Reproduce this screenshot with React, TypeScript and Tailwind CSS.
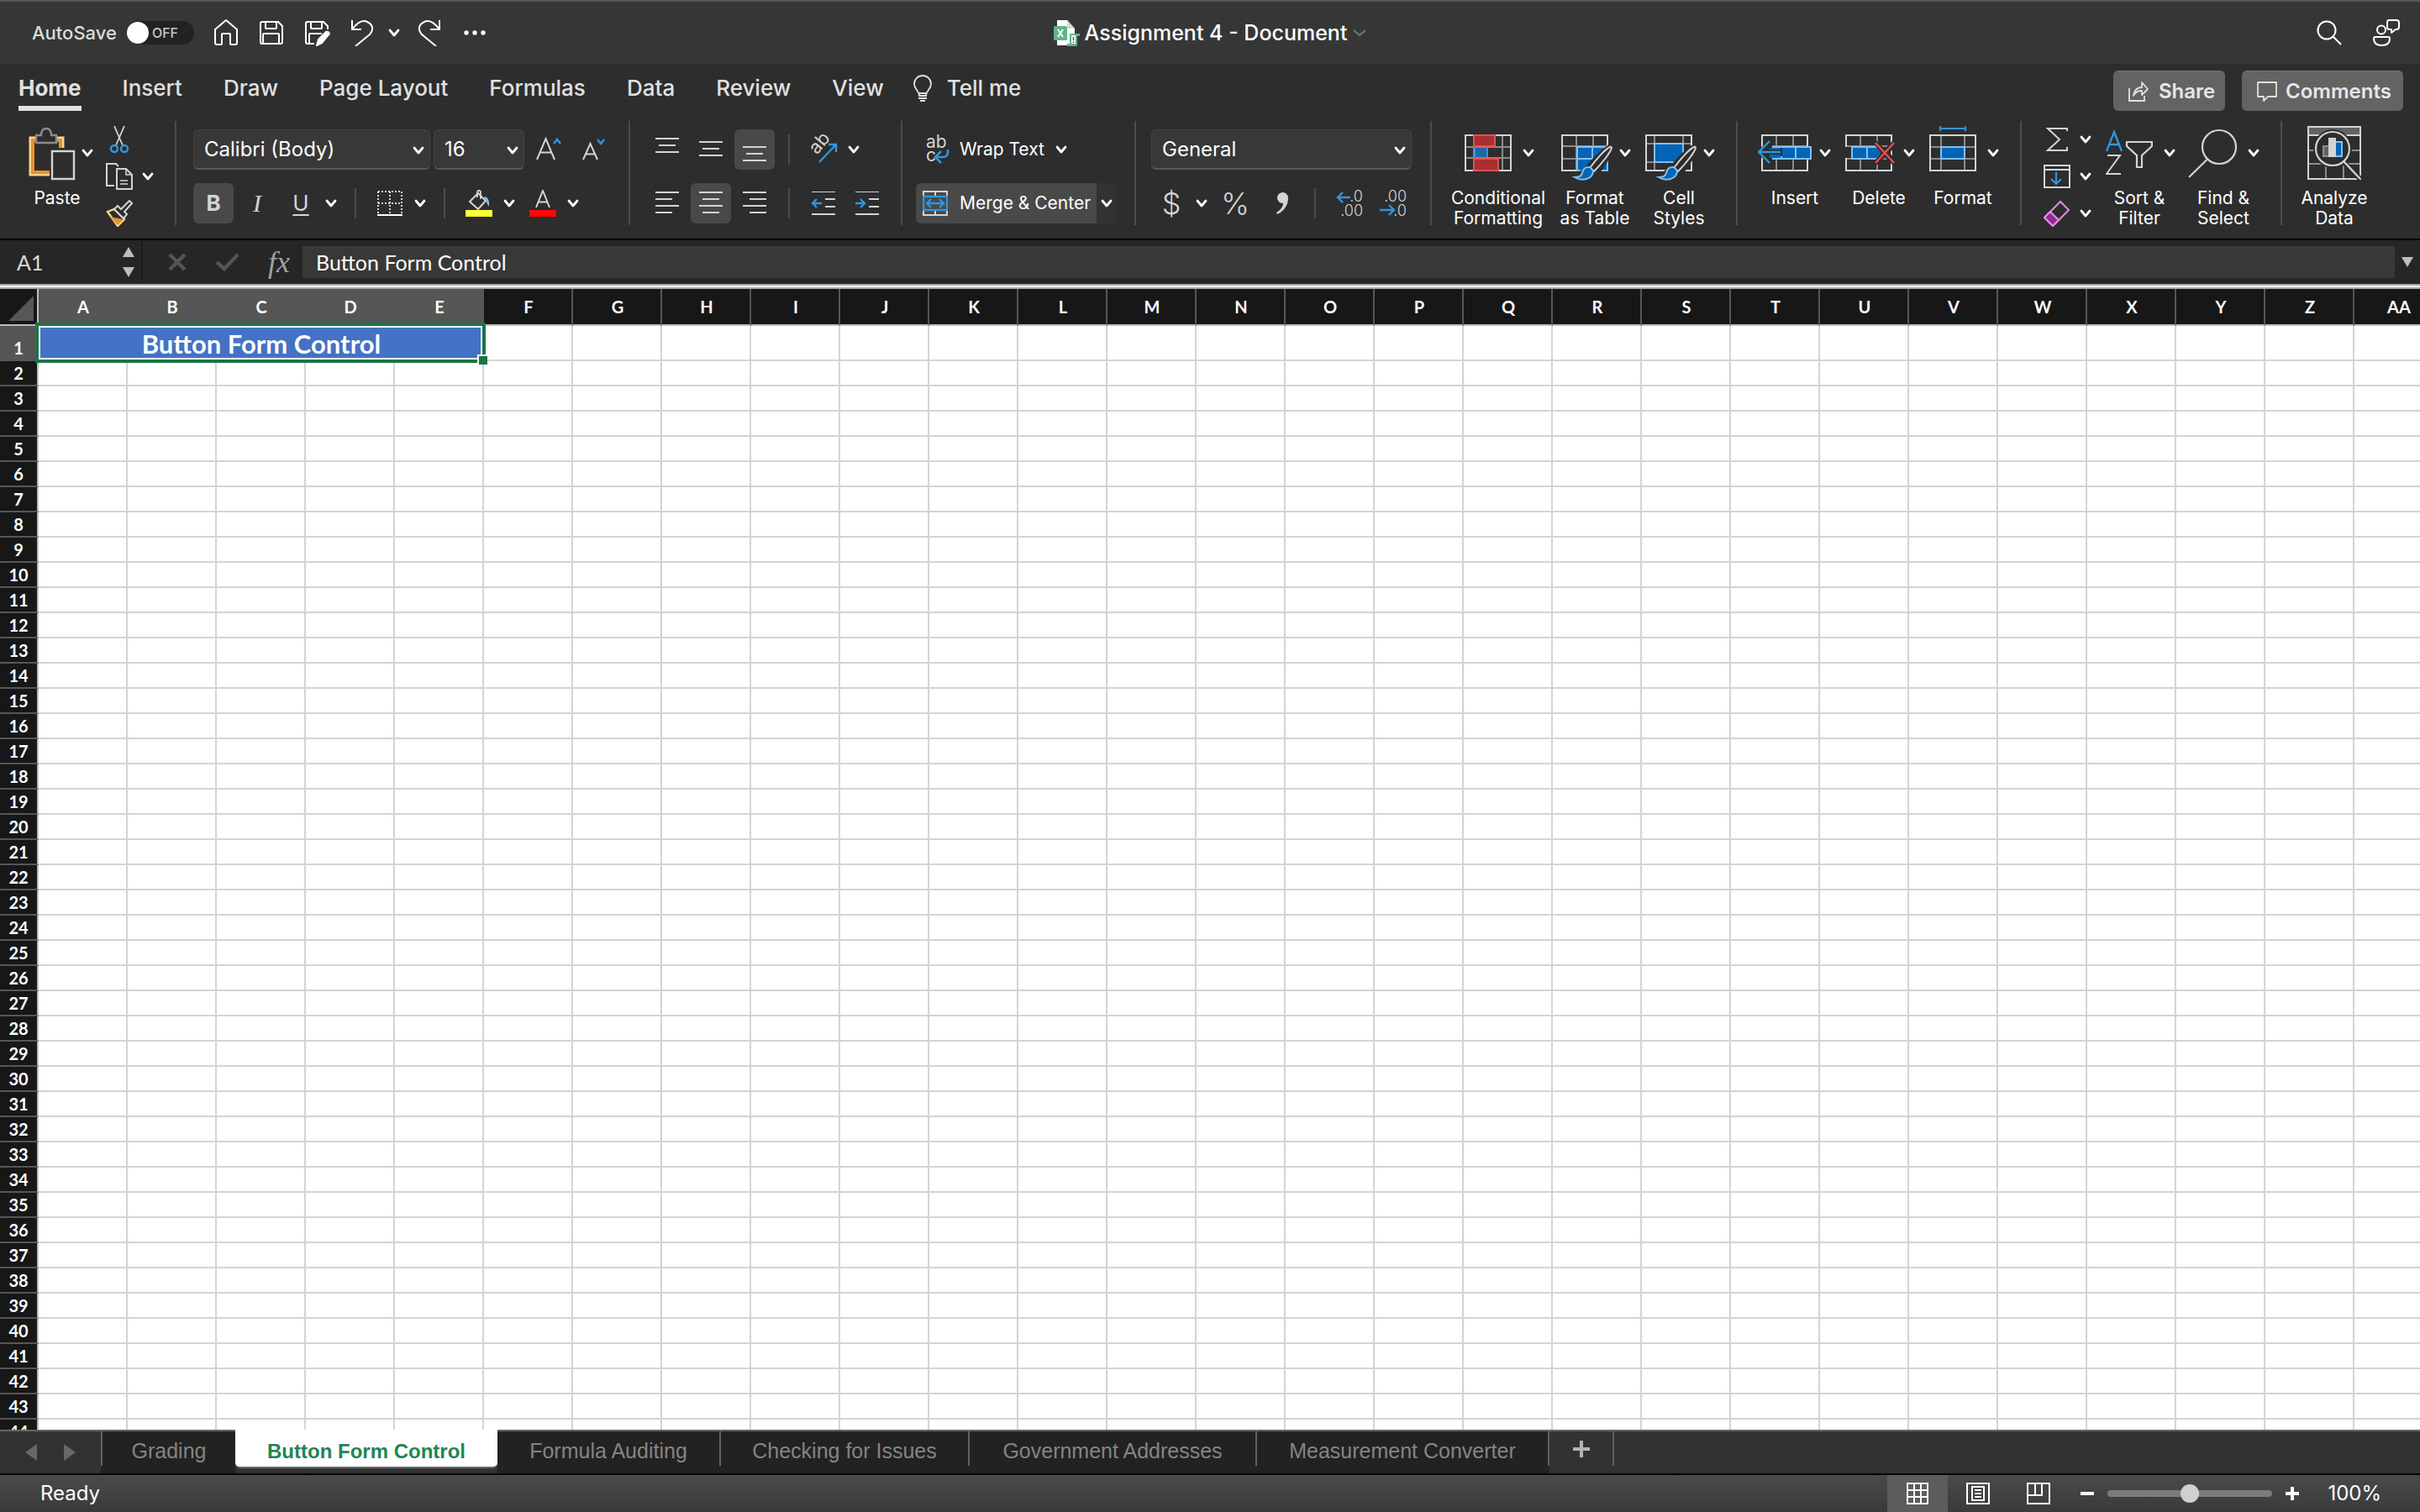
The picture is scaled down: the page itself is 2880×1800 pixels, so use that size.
import type { ReactNode } from "react";

const UI = "font-['Inter','Noto_Sans',sans-serif]";
const SHEET = "font-['Lato','Noto_Sans',sans-serif]";
const ARIAL = "font-['Liberation_Sans',Arial,sans-serif]";

const COLUMNS = [..."ABCDEFGHIJKLMNOPQRSTUVWXYZ", "AA"];
const ROWS = Array.from({ length: 43 }, (_, i) => i + 2);
const RIBBON_TABS = ["Insert", "Draw", "Page Layout", "Formulas", "Data", "Review", "View"];

const line = "#d4d4d4";
const dim = "#8c8c8c";
const blue = "#3096dc";
const sky = "#83bfec";
const fill = "#0364b8";
const bg = "#2d2d2d";

/* ---------- small shared pieces ---------- */

function Chevron({ className = "" }: { className?: string }) {
  return (
    <svg viewBox="0 0 16 12" className={`w-4 h-3 shrink-0 ${className}`} fill="none">
      <path d="M3 3l5 6 5-6" stroke="#fff" strokeWidth="2.8" strokeLinecap="round" strokeLinejoin="round" />
    </svg>
  );
}

function MenuArrow({ label, className = "" }: { label: string; className?: string }) {
  return (
    <button aria-label={label} className={`h-12 w-4 shrink-0 flex items-center justify-center ${className}`}>
      <Chevron />
    </button>
  );
}

function Divider() {
  return <div className="w-0.5 h-[124px] shrink-0 bg-[#4c4c4c]" />;
}

function ShortDivider({ className = "" }: { className?: string }) {
  return <div className={`w-0.5 h-9 shrink-0 bg-[#4c4c4c] ${className}`} />;
}

function Tool({ label, on, children }: { label: string; on?: boolean; children: ReactNode }) {
  return (
    <button
      aria-label={label}
      aria-pressed={!!on}
      className={`w-12 h-12 shrink-0 rounded-md flex items-center justify-center ${on ? "bg-[#494949]" : ""}`}
    >
      {children}
    </button>
  );
}

function IconTool({ label, className = "", children }: { label: string; className?: string; children: ReactNode }) {
  return (
    <button aria-label={label} className={`w-8 h-12 shrink-0 flex items-center justify-center ${className}`}>
      {children}
    </button>
  );
}

function SmallTool({ label, menu, children }: { label: string; menu?: boolean; children: ReactNode }) {
  return (
    <button aria-label={label} className="h-10 w-[58px] flex items-center justify-between">
      {children}
      {menu && <Chevron />}
    </button>
  );
}

function BigTool({
  icon,
  lines,
  menu = true,
  className = "w-[100px]",
}: {
  icon: ReactNode;
  lines: string[];
  menu?: boolean;
  className?: string;
}) {
  return (
    <button className={`shrink-0 pt-1.5 flex flex-col items-center ${className}`}>
      <span className="h-16 flex items-center gap-3">
        {icon}
        {menu && <Chevron />}
      </span>
      <span className={`mt-2.5 text-[21px] leading-6 text-white whitespace-nowrap ${menu ? "pr-1" : ""}`}>
        {lines.map((l) => (
          <span key={l} className="block">
            {l}
          </span>
        ))}
      </span>
    </button>
  );
}

function Dropdown({ label, value, className }: { label: string; value: string; className: string }) {
  return (
    <label className={`relative block h-12 shrink-0 ${className}`}>
      <span className="sr-only">{label}</span>
      <select
        defaultValue={value}
        className="appearance-none w-full h-full pl-3 pr-8 rounded-md bg-[#383838] border border-[#434343] border-b-2 border-b-[#585858] text-2xl leading-9 text-white"
      >
        <option>{value}</option>
      </select>
      <Chevron className="absolute right-1.5 top-[19px]" />
    </label>
  );
}

/* ---------- icons ---------- */

function Lines({ rows }: { rows: number[][] }) {
  return (
    <svg viewBox="0 0 28 28" className="w-7 h-7">
      {rows.map(([x, y, w]) => (
        <rect key={y} x={x} y={y} width={w} height="2" fill={line} />
      ))}
    </svg>
  );
}

function PasteIcon() {
  return (
    <svg viewBox="-6 0 56 64" className="w-14 h-16 overflow-visible" fill="none">
      <path d="M26 58H2V14h39v12" stroke="#f8d58c" strokeWidth="3" />
      <path d="M26 55H5V17h33v9" stroke="#e8912d" strokeWidth="4" />
      <path d="M9 20V11h6c0-5 2-8 6-8s6 3 6 8h6v9z" fill={bg} stroke={dim} strokeWidth="2.4" />
      <path d="M25 27h30v37H25z" fill={bg} />
      <rect x="28" y="30" width="26" height="33" fill={bg} stroke={line} strokeWidth="2.4" />
    </svg>
  );
}

function CutIcon() {
  return (
    <svg viewBox="0 0 32 32" className="w-8 h-8" fill="none">
      <path d="M10 0l10 23M22 0L12 23" stroke={line} strokeWidth="1.8" />
      <circle cx="10" cy="27" r="4" stroke={blue} strokeWidth="2.4" />
      <circle cx="22" cy="27" r="4" stroke={blue} strokeWidth="2.4" />
    </svg>
  );
}

function CopyIcon() {
  return (
    <svg viewBox="0 0 32 32" className="w-8 h-8" fill="none" stroke={line} strokeWidth="2">
      <path d="M10 27H1V1h11l3 3" />
      <path d="M13 7h11l7 7v17H13z" />
      <path d="M24 7v7h7M17 21h9M17 25h9" strokeWidth="1.6" />
    </svg>
  );
}

function BrushIcon() {
  return (
    <svg viewBox="0 0 32 32" className="w-8 h-8" fill="none">
      <path d="M2 14l8-3 12 12-8 8z" fill={bg} stroke="#f8d58c" strokeWidth="2.4" />
      <path d="M5 20l15 3-6 7z" fill="#e8912d" />
      <path d="M10 11l4-4 4 4L28 1l3 3-9 10 3 3-4 5z" stroke={line} strokeWidth="2" fill={bg} />
    </svg>
  );
}

function FontSizeIcon({ up }: { up?: boolean }) {
  return (
    <svg viewBox="0 0 32 32" className="w-8 h-8" fill="none">
      <path
        d={up ? "M3 28L13.500 3 24 28M7 19.500h13" : "M2 28L10.500 9 19 28M5 21.500h11"}
        stroke={line}
        strokeWidth="2"
      />
      <path d={up ? "M23 9l4-5 4 5" : "M19 4l4 5 4-5"} stroke={blue} strokeWidth="2.4" />
    </svg>
  );
}

function BordersIcon() {
  return (
    <svg viewBox="0 0 30 30" className="w-[30px] h-[30px]" fill="none">
      <path d="M1 1h28M1 15h28M1 1v26M15 1v26M29 1v26" stroke={line} strokeWidth="2" strokeDasharray="2 2" />
      <path d="M0 29h30" stroke="#fff" strokeWidth="2" />
    </svg>
  );
}

function FillColorIcon() {
  return (
    <svg viewBox="0 0 32 32" className="w-8 h-8" fill="none">
      <path d="M5 14L15 4l9 9-9 10z" stroke={line} strokeWidth="2" />
      <path d="M14 9V3c0-3 4-3 4 0v8" stroke={line} strokeWidth="1.800" />
      <path d="M22 8c4 0 7 4 6 12-2-3-3-5-4-7z" fill={sky} />
      <rect y="24" width="32" height="8" fill="#ffff38" />
    </svg>
  );
}

function FontColorIcon() {
  return (
    <svg viewBox="0 0 32 32" className="w-8 h-8" fill="none">
      <path d="M8 21L16 1l8 20M11 14.500h10" stroke={line} strokeWidth="2" />
      <rect y="24" width="32" height="8" fill="#ff0808" />
    </svg>
  );
}

function OrientationIcon() {
  return (
    <svg viewBox="0 0 32 32" className="w-8 h-8 overflow-visible">
      <text x="8" y="22" fill={line} fontSize="22" transform="rotate(-50 9 22)">
        ab
      </text>
      <path d="M11 31L31 10M22 10h9v9" fill="none" stroke={blue} strokeWidth="2.4" />
    </svg>
  );
}

function IndentIcon({ more }: { more?: boolean }) {
  return (
    <svg viewBox="0 0 28 28" className="w-7 h-7" fill="none">
      <path d="M0 0h28M16 9h12M16 18h12M0 27h28" stroke={line} strokeWidth="2" />
      <path d={more ? "M0 14h11M6 9l5 5-5 5" : "M12 14H1M6 9l-5 5 5 5"} stroke={blue} strokeWidth="2.4" />
    </svg>
  );
}

function WrapIcon() {
  return (
    <svg viewBox="0 0 32 32" className="w-8 h-8 overflow-visible">
      <text x="4" y="14" fill={line} fontSize="21">ab</text>
      <text x="4" y="30" fill={line} fontSize="21">c</text>
      <path d="M30 16v3c0 4-2 6-6 6h-8M22 18l-7 7 7 7" fill="none" stroke={blue} strokeWidth="2.600" />
    </svg>
  );
}

function MergeIcon() {
  return (
    <svg viewBox="0 0 30 30" className="w-[30px] h-[30px] mr-0.5" fill="none">
      <path d="M1 7V1h28v6M15 1v5M1 23v6h28v-6M15 24v5" stroke={line} strokeWidth="2" />
      <rect x="1" y="7" width="28" height="16" stroke={blue} strokeWidth="2.4" />
      <path d="M5 15h20M10 10l-5 5 5 5M20 10l5 5-5 5" stroke={blue} strokeWidth="2.400" />
    </svg>
  );
}

function DecimalIcon({ less }: { less?: boolean }) {
  return (
    <svg viewBox="0 0 32 32" className="w-8 h-8 overflow-visible">
      <text x="32" y="14" textAnchor="end" fill={line} fontSize="18">{less ? ".00" : ".0"}</text>
      <text x="32" y="31" textAnchor="end" fill={line} fontSize="18">{less ? ".0" : ".00"}</text>
      <path
        d={less ? "M0 24h17M11 18l6 6-6 6" : "M17 9H2M8 3L2 9l6 6"}
        fill="none"
        stroke={blue}
        strokeWidth="2.4"
      />
    </svg>
  );
}

function GridIcon({ children, cells = "M18 11v42M38 11v42M1 24h54M1 39h54" }: { children: ReactNode; cells?: string }) {
  return (
    <svg viewBox="0 0 56 64" className="w-14 h-16 overflow-visible" fill="none">
      <path d={cells} stroke={dim} strokeWidth="2" />
      <rect x="1" y="11" width="54" height="42" stroke={line} strokeWidth="2" />
      {children}
    </svg>
  );
}

function PaintBrush() {
  return (
    <>
      <path d="M57 22C48 27 38 38 31 46l-9 8-6 8h26L62 32z" fill={bg} />
      <path d="M58 25c-5 2-16 14-24 25l5 4c9-9 20-23 21-28 0-1-1-2-2-1z" fill={bg} stroke={line} strokeWidth="2" />
      <path d="M34 49c-8-1-8 5-10 9-1 2-4 3-8 3 8 5 22 3 22-8z" fill={fill} stroke={sky} strokeWidth="2" />
    </>
  );
}

function ConditionalIcon() {
  return (
    <GridIcon cells="M11 11v42M45 11v42M1 25h54M1 38h54">
      <rect x="12" y="26" width="15" height="11" fill="#1a69a6" />
      <path d="M27 25v13M12 25v13" stroke={blue} strokeWidth="2" />
      <rect x="28" y="27" width="16" height="10" fill={bg} />
      <rect x="11" y="11" width="25" height="13" fill="#a92f31" stroke="#e05252" strokeWidth="2" />
      <rect x="11" y="39" width="29" height="14" fill="#a92f31" stroke="#e05252" strokeWidth="2" />
    </GridIcon>
  );
}

function FormatTableIcon() {
  return (
    <GridIcon>
      <path d="M19 25h36v28H19z" fill={fill} stroke={sky} strokeWidth="2" />
      <path d="M37 25v28M19 39h36" stroke={sky} strokeWidth="2" />
      <PaintBrush />
    </GridIcon>
  );
}

function CellStylesIcon() {
  return (
    <GridIcon cells="M11 11v42M45 11v42M1 21h54M1 43h54">
      <rect x="11" y="21" width="34" height="22" fill={fill} stroke={sky} strokeWidth="2" />
      <PaintBrush />
    </GridIcon>
  );
}

function InsertIcon() {
  return (
    <GridIcon>
      <rect x="10" y="25" width="49" height="14" fill={fill} stroke={sky} strokeWidth="2" />
      <path d="M24 25v14M41 25v14" stroke={sky} strokeWidth="2" />
      <path d="M-5 31L9 16h4v10h12v10H13v11H9z" fill={bg} />
      <rect x="10" y="26" width="13" height="12" fill={fill} />
      <path d="M7 28h17v6H7z" fill={bg} />
      <path d="M-2 31h25M10 18L-3 31l13 13" stroke={blue} strokeWidth="2.4" />
    </GridIcon>
  );
}

function DeleteIcon() {
  return (
    <GridIcon>
      <rect x="-2" y="25" width="10" height="13" fill={bg} />
      <path d="M8 25h30l5 7-5 7H8zM26 25v14" fill={fill} stroke={sky} strokeWidth="2" />
      <path d="M37 17l10 10 10-10 5 4-9 11 9 11-5 4-10-10-10 10-3-4 8-11-8-11z" fill={bg} />
      <path d="M36 20l22 24M58 20L36 44" stroke="#f04a4a" strokeWidth="2.4" />
    </GridIcon>
  );
}

function FormatIcon() {
  return (
    <GridIcon cells="M14 11v42M42 11v42M1 25h54M1 39h54">
      <rect x="14" y="25" width="28" height="14" fill={fill} stroke={sky} strokeWidth="2" />
      <path d="M13 3h30M13 0v6M43 0v6" stroke={blue} strokeWidth="2" />
    </GridIcon>
  );
}

function SumIcon() {
  return (
    <svg viewBox="0 0 32 32" className="w-8 h-8" fill="none">
      <path d="M28 6V3H5l14 13L5 29h23v-4" stroke={line} strokeWidth="2" />
    </svg>
  );
}

function FillDownIcon() {
  return (
    <svg viewBox="0 0 32 32" className="w-8 h-8" fill="none">
      <path d="M1 3h30v26H1zM1 8h30" stroke={line} strokeWidth="2" />
      <path d="M15 11v14M9 19l6 6 6-6" stroke={blue} strokeWidth="2.2" />
    </svg>
  );
}

function EraserIcon() {
  return (
    <svg viewBox="0 0 32 32" className="w-8 h-8" fill="none" stroke="#e08fe0" strokeWidth="2">
      <path d="M1 21L20 2l10 10-19 19z" />
      <path d="M1 21l7-7 10 10-7 7z" fill="#93289a" />
    </svg>
  );
}

function SortFilterIcon() {
  return (
    <svg viewBox="0 0 56 64" className="w-14 h-16" fill="none">
      <path d="M1 30L10 7l9 23M4 22h12" stroke={blue} strokeWidth="2.4" />
      <path d="M2 35h15L1 57h17" stroke={line} strokeWidth="2" />
      <path d="M25 19h30v5L43 35v14h-6V35L25 24z" stroke={line} strokeWidth="2.2" />
    </svg>
  );
}

function FindIcon() {
  return (
    <svg viewBox="0 0 56 64" className="w-14 h-16 overflow-visible" fill="none" stroke={line} strokeWidth="2.200">
      <circle cx="35" cy="25" r="20" />
      <path d="M20.500 40L-1 61" />
    </svg>
  );
}

function AnalyzeIcon() {
  return (
    <svg viewBox="0 0 64 64" className="w-16 h-16" fill="none">
      <rect x="2" y="2" width="60" height="9" fill="#636363" />
      <path d="M1 29h62M1 45h62M22 45v18M43 45v18" stroke={dim} strokeWidth="2" />
      <rect x="1" y="1" width="62" height="62" stroke={line} strokeWidth="2" />
      <path d="M1 11h62" stroke={line} strokeWidth="2" />
      <circle cx="30" cy="27" r="23" fill={bg} />
      <path d="M42 42l21 21" stroke={bg} strokeWidth="6" />
      <rect x="19" y="24" width="8" height="12" fill="#636363" stroke={dim} strokeWidth="2" />
      <rect x="33" y="19" width="8" height="17" fill={fill} stroke={sky} strokeWidth="2" />
      <rect x="25" y="14" width="9" height="23" fill={line} />
      <circle cx="30" cy="27" r="20" stroke={line} strokeWidth="2.2" />
      <path d="M43 42l20 21" stroke={line} strokeWidth="2.4" />
    </svg>
  );
}

/* ---------- title bar ---------- */

function TitleBar() {
  const quick = "w-7 h-8 shrink-0";
  return (
    <header className="h-[76px] border-t-2 border-[#585858] bg-[#363636] grid grid-cols-[1fr_auto_1fr] items-center">
      <div className="flex items-center pl-[38px]">
        <label className="flex items-center gap-3 text-[22px] leading-7 font-medium text-[#dcdcdc]">
          AutoSave
          <span className="relative w-20 h-7 rounded-full bg-[#222] flex items-center">
            <input type="checkbox" className="absolute inset-0 w-full h-full appearance-none" />
            <span className="w-[26px] h-[26px] rounded-full bg-white" />
            <span className="ml-1 text-base leading-5 text-[#c8c8c8]">OFF</span>
          </span>
        </label>
        <div className="ml-6 flex items-center gap-[26px]">
          <button aria-label="Home">
            <svg viewBox="0 0 28 32" className={quick} fill="none" stroke="#fff" strokeWidth="2" strokeLinejoin="round">
              <path d="M1 12L14 1l13 11v16q0 2-2 2h-5q-1 0-1-1V18q0-1-1-1h-8q-1 0-1 1v11q0 1-1 1H3q-2 0-2-2z" />
            </svg>
          </button>
          <button aria-label="Save">
            <svg viewBox="0 0 28 32" className={quick} fill="none" stroke="#fff" strokeWidth="2" strokeLinejoin="round">
              <path d="M3 3h19l5 5v19q0 2-2 2H3q-2 0-2-2V5q0-2 2-2z" />
              <path d="M7 3v7q0 1 1 1h11q1 0 1-1V3M4 29V18q0-1 1-1h17q1 0 1 1v11" />
            </svg>
          </button>
          <button aria-label="Save as">
            <svg viewBox="0 0 28 32" className={`${quick} overflow-visible`} fill="none" stroke="#fff" strokeWidth="2" strokeLinejoin="round">
              <path d="M11 29H3q-2 0-2-2V5q0-2 2-2h19l5 5v4" />
              <path d="M7 3v7q0 1 1 1h11q1 0 1-1V3M5 29V18q0-1 1-1h14" />
              <path d="M14 31l2-7 9-9q3-1 4 2l-9 11z" fill="#fff" />
            </svg>
          </button>
          <button aria-label="Undo">
            <svg viewBox="0 0 28 32" className={quick} fill="none" stroke="#fff" strokeWidth="2">
              <path d="M2 1v11h11M2 12C8 4 14 0 20 3c7 3 8 10 3 15L6 32" />
            </svg>
          </button>
        </div>
        <MenuArrow label="Undo history" className="ml-4" />
        <button aria-label="Redo" className="ml-5">
          <svg viewBox="0 0 28 32" className={quick} fill="none" stroke="#fff" strokeWidth="2">
            <path d="M26 1v11H15M26 12C20 4 14 0 8 3c-7 3-8 10-3 15l17 14" />
          </svg>
        </button>
        <button aria-label="More" className="ml-[26px]">
          <svg viewBox="0 0 28 32" className={quick} fill="#fff">
            <circle cx="4" cy="16" r="2.700" />
            <circle cx="14" cy="16" r="2.700" />
            <circle cx="24" cy="16" r="2.700" />
          </svg>
        </button>
      </div>

      <button className="flex items-center gap-1.5 text-[25px] leading-8 font-medium text-white">
        <svg viewBox="0 0 32 32" className="w-8 h-8">
          <path d="M5 1h12l9 10v20H5z" fill="#fff" />
          <path d="M17 1v10h9z" fill="#d8d8d8" />
          <rect x="1" y="8" width="16" height="17" rx="1.500" fill="#5fb48c" />
          <path d="M6 12l6 9M12 12l-6 9" stroke="#fff" strokeWidth="1.800" />
          <path d="M20 17h12v3h-3v10q0 2-2 2H17v-3h3z" fill="#5fb48c" />
          <path d="M22 19h5v10h-5z" fill="#fff" />
          <path d="M24.500 21v4M24.500 26.500v1.500" stroke="#555" strokeWidth="1.500" />
        </svg>
        Assignment 4 - Document
        <svg viewBox="0 0 18 12" className="w-[18px] h-3" fill="none">
          <path d="M2 3l7 6 7-6" stroke="#6c6c6c" strokeWidth="2.400" />
        </svg>
      </button>

      <div className="flex items-center justify-end gap-9 pr-6">
        <button aria-label="Search">
          <svg viewBox="0 0 32 32" className="w-8 h-8" fill="none" stroke="#fff" strokeWidth="2">
            <circle cx="13" cy="13" r="10.500" />
            <path d="M20.500 20.500L30 30" />
          </svg>
        </button>
        <button aria-label="Presence">
          <svg viewBox="0 0 32 32" className="w-8 h-8" fill="none" stroke="#fff" strokeWidth="2">
            <circle cx="10" cy="12.500" r="5" />
            <path d="M3 21h15q2 0 2 2 0 8-9.500 8T1 23q0-2 2-2z" />
            <path d="M19 1h9q3 0 3 3v5q0 3-3 3h-1l-5 4v-4h-3q-2 0-2-3V4q0-3 2-3z" strokeLinejoin="round" />
          </svg>
        </button>
      </div>
    </header>
  );
}

function RibbonTabs() {
  const action = "h-12 rounded-md bg-[#636363] border-t border-[#777] flex items-center text-2xl leading-7 font-semibold text-[#e6e6e6]";
  return (
    <nav className="h-[60px] flex items-start justify-between pl-[22px] pr-5 pt-2 text-[#e0e0e0]">
      <div className="flex items-start gap-[49px] text-[26px] leading-[42px] font-medium whitespace-nowrap">
        <button className="font-bold h-12 border-b-[6px] border-[#e0e0e0]">Home</button>
        {RIBBON_TABS.map((t) => (
          <button key={t}>{t}</button>
        ))}
        <button className="-ml-3.5 flex items-center gap-[18px]">
          <svg viewBox="0 0 22 32" className="w-[22px] h-8" fill="none" stroke="#e0e0e0" strokeWidth="1.800">
            <path d="M7 25c0-6-6-8-6-14a10 10 0 0 1 20 0c0 6-6 8-6 14zM7 22h8M6 28h10M8 31h6" />
          </svg>
          Tell me
        </button>
      </div>
      <div className="flex gap-5">
        <button className={`${action} w-[133px] pl-[18px] gap-3`}>
          <svg viewBox="0 0 24 26" className="w-6 h-[26px] shrink-0" fill="none" stroke="#e0e0e0" strokeWidth="1.800">
            <path d="M1 9v15h18v-6" />
            <path d="M6 18c1-7 4-10 10-10V2l7 8-7 7v-5c-5 0-8 2-10 6z" strokeLinejoin="round" />
          </svg>
          Share
        </button>
        <button className={`${action} w-48 pl-[18px] gap-2.5`}>
          <svg viewBox="0 0 24 26" className="w-6 h-[26px] shrink-0" fill="none" stroke="#e0e0e0" strokeWidth="1.800">
            <path d="M1 2h22v17H13l-5 5v-5H1z" strokeLinejoin="round" />
          </svg>
          Comments
        </button>
      </div>
    </nav>
  );
}

/* ---------- ribbon ---------- */

function Ribbon() {
  const group = "shrink-0 pt-2.5 flex flex-col gap-4";
  const row = "flex items-center h-12";
  return (
    <section aria-label="Home ribbon" className="flex items-start pt-2 pb-2.5 overflow-hidden">
      <div className="w-52 shrink-0 flex items-start pl-5">
        <BigTool icon={<PasteIcon />} lines={["Paste"]} />
        <div className="pt-0.5 pl-1.5 flex flex-col gap-1">
          <SmallTool label="Cut"><CutIcon /></SmallTool>
          <SmallTool label="Copy" menu><CopyIcon /></SmallTool>
          <SmallTool label="Format painter"><BrushIcon /></SmallTool>
        </div>
      </div>
      <Divider />

      <div className={`${group} w-[538px] pl-5`}>
        <div className={row}>
          <Dropdown label="Font" value="Calibri (Body)" className="w-[282px]" />
          <Dropdown label="Font size" value="16" className="ml-1 w-[108px]" />
          <IconTool label="Increase font size" className="ml-3"><FontSizeIcon up /></IconTool>
          <IconTool label="Decrease font size" className="ml-6"><FontSizeIcon /></IconTool>
        </div>
        <div className={row}>
          <div className="flex gap-1 text-[26px] leading-8 text-[#d4d4d4]">
            <Tool label="Bold" on><b>B</b></Tool>
            <Tool label="Italic"><i className="font-['Liberation_Serif',serif] text-3xl">I</i></Tool>
            <Tool label="Underline"><span className="underline underline-offset-4 decoration-2">U</span></Tool>
            <MenuArrow label="Underline styles" />
          </div>
          <ShortDivider className="ml-5" />
          <IconTool label="Borders" className="ml-6"><BordersIcon /></IconTool>
          <MenuArrow label="Border styles" className="ml-3" />
          <ShortDivider className="ml-5" />
          <IconTool label="Fill color" className="ml-6"><FillColorIcon /></IconTool>
          <MenuArrow label="Fill colors" className="ml-3" />
          <IconTool label="Font color" className="ml-4"><FontColorIcon /></IconTool>
          <MenuArrow label="Font colors" className="ml-3" />
        </div>
      </div>
      <Divider />

      <div className={`${group} w-[322px] pl-5`}>
        <div className={row}>
          <div className="flex gap-1">
            <Tool label="Top align"><Lines rows={[[0, 0, 28], [4, 8, 20], [0, 16, 28]]} /></Tool>
            <Tool label="Middle align"><Lines rows={[[0, 4, 28], [4, 12, 20], [0, 20, 28]]} /></Tool>
            <Tool label="Bottom align" on><Lines rows={[[0, 10, 28], [4, 18, 20], [0, 26, 28]]} /></Tool>
          </div>
          <ShortDivider className="ml-4" />
          <IconTool label="Orientation" className="ml-6"><OrientationIcon /></IconTool>
          <MenuArrow label="Orientation options" className="ml-3" />
        </div>
        <div className={row}>
          <div className="flex gap-1">
            <Tool label="Align left"><Lines rows={[[0, 0, 28], [0, 8, 20], [0, 16, 28], [0, 24, 20]]} /></Tool>
            <Tool label="Align center" on><Lines rows={[[0, 0, 28], [4, 8, 20], [0, 16, 28], [4, 24, 20]]} /></Tool>
            <Tool label="Align right"><Lines rows={[[0, 0, 28], [8, 8, 20], [0, 16, 28], [8, 24, 20]]} /></Tool>
          </div>
          <ShortDivider className="ml-4" />
          <div className="ml-4 flex gap-1">
            <Tool label="Decrease indent"><IndentIcon /></Tool>
            <Tool label="Increase indent"><IndentIcon more /></Tool>
          </div>
        </div>
      </div>
      <Divider />

      <div className={`${group} w-[276px] pl-4 text-[21px] leading-6 text-white whitespace-nowrap`}>
        <button className={`${row} pl-2 gap-3`}>
          <WrapIcon />
          Wrap Text
          <Chevron />
        </button>
        <div className={row}>
          <button aria-pressed="true" className="h-12 w-[215px] shrink-0 pl-2 flex items-center gap-3 rounded-l-md bg-[#494949]">
            <MergeIcon />
            Merge &amp; Center
          </button>
          <button aria-label="Merge options" className="h-12 w-6 shrink-0 flex items-center justify-center rounded-r-md bg-[#323232]">
            <Chevron />
          </button>
        </div>
      </div>
      <Divider />

      <div className={`${group} w-[350px] pl-[18px]`}>
        <Dropdown label="Number format" value="General" className="w-[310px]" />
        <div className={`${row} text-[36px] leading-10 font-light text-[#d4d4d4]`}>
          <IconTool label="Currency" className="ml-2">$</IconTool>
          <MenuArrow label="Currency formats" className="ml-3" />
          <IconTool label="Percent" className="ml-4">%</IconTool>
          <IconTool label="Comma style" className="ml-6">
            <svg viewBox="0 0 16 28" className="w-4 h-7" fill={line}>
              <path d="M8 1a6.500 6.500 0 0 1 7 7C15 17 9 24 2 27l-1-2c5-3 8-7 8-11A6.500 6.500 0 1 1 8 1z" />
            </svg>
          </IconTool>
          <ShortDivider className="ml-[22px]" />
          <IconTool label="Increase decimal" className="ml-6"><DecimalIcon /></IconTool>
          <IconTool label="Decrease decimal" className="ml-5"><DecimalIcon less /></IconTool>
        </div>
      </div>
      <Divider />

      <div className="w-[362px] shrink-0 flex items-start pl-4">
        <BigTool icon={<ConditionalIcon />} lines={["Conditional", "Formatting"]} className="w-[130px]" />
        <BigTool icon={<FormatTableIcon />} lines={["Format", "as Table"]} />
        <BigTool icon={<CellStylesIcon />} lines={["Cell", "Styles"]} />
      </div>
      <Divider />

      <div className="w-[336px] shrink-0 flex items-start pl-5">
        <BigTool icon={<InsertIcon />} lines={["Insert"]} />
        <BigTool icon={<DeleteIcon />} lines={["Delete"]} />
        <BigTool icon={<FormatIcon />} lines={["Format"]} />
      </div>
      <Divider />

      <div className="w-[308px] shrink-0 flex items-start pl-[26px]">
        <div className="pt-0.5 flex flex-col gap-1 mr-2">
          <SmallTool label="AutoSum" menu><SumIcon /></SmallTool>
          <SmallTool label="Fill" menu><FillDownIcon /></SmallTool>
          <SmallTool label="Clear" menu><EraserIcon /></SmallTool>
        </div>
        <BigTool icon={<SortFilterIcon />} lines={["Sort &", "Filter"]} />
        <BigTool icon={<FindIcon />} lines={["Find &", "Select"]} />
      </div>
      <Divider />
      <BigTool icon={<AnalyzeIcon />} lines={["Analyze", "Data"]} menu={false} className="w-[124px]" />
    </section>
  );
}

/* ---------- formula bar ---------- */

function FormulaBar() {
  return (
    <div className={`h-[54px] shrink-0 border-t-2 border-black bg-[#262626] flex items-center ${SHEET}`}>
      <div className="w-[170px] h-full flex items-center justify-between pl-5 pr-2 border-r-2 border-[#1e1e1e]">
        <input aria-label="Name box" defaultValue="A1" className="w-24 text-[25px] leading-8 text-[#dcdcdc] bg-transparent" />
        <svg viewBox="0 0 14 36" className="w-3.5 h-9" fill="#bdbdbd">
          <path d="M7 0l7 12H0zM0 24h14L7 36z" />
        </svg>
      </div>
      <button aria-label="Cancel" className="ml-[30px]">
        <svg viewBox="0 0 22 22" className="w-[22px] h-[22px]">
          <path d="M2 2l18 18M20 2L2 20" stroke="#545454" strokeWidth="4.500" />
        </svg>
      </button>
      <button aria-label="Enter" className="ml-[34px]">
        <svg viewBox="0 0 30 22" className="w-[30px] h-[22px]" fill="none">
          <path d="M2 11l9 8L27 2" stroke="#545454" strokeWidth="4.500" />
        </svg>
      </button>
      <button aria-label="Insert function" className="ml-7 w-9 h-12 font-['Liberation_Serif',serif] italic text-[36px] leading-[48px] text-[#a0a0a0]">
        fx
      </button>
      <input
        aria-label="Formula"
        defaultValue="Button Form Control"
        className="ml-2.5 h-[38px] min-w-0 flex-1 pl-4 bg-[#383838] text-[25px] leading-8 text-white"
      />
      <button aria-label="Expand formula bar" className="w-[30px] flex justify-center">
        <svg viewBox="0 0 14 12" className="w-3.5 h-3" fill="#bdbdbd">
          <path d="M0 0h14L7 12z" />
        </svg>
      </button>
    </div>
  );
}

/* ---------- grid ---------- */

function Sheet() {
  const rowHead = "p-0 border-r-2 border-b-2 border-r-[#bdbdbd] border-b-[#565656] font-bold text-white align-bottom leading-7";
  return (
    <main className={`flex-1 min-h-0 overflow-hidden border-t-2 border-[#a8a8a8] bg-white ${SHEET}`}>
      <div className="h-1 border-t-2 border-t-white bg-[#a8a8a8]" />
      <table className="table-fixed w-[2908px] border-separate border-spacing-0 text-xl">
        <colgroup>
          <col className="w-[46px]" />
          {COLUMNS.map((c) => (
            <col key={c} className="w-[106px]" />
          ))}
        </colgroup>
        <thead>
          <tr className="h-11">
            <th aria-label="Select all" className="p-0 h-11 bg-[#171717] border-r-2 border-b-2 border-[#bdbdbd]">
              <svg viewBox="0 0 44 42" className="w-11 h-[42px] block" fill="#575757">
                <path d="M40 8v30H10z" />
              </svg>
            </th>
            {COLUMNS.map((c, i) => (
              <th
                key={c}
                scope="col"
                className={`p-0 pl-0.5 h-11 border-r-2 border-b-2 border-b-[#bdbdbd] border-r-[#565656] text-white font-bold leading-7 ${
                  i < 5 ? "bg-[#565656]" : "bg-[#171717]"
                }`}
              >
                {c}
              </th>
            ))}
          </tr>
        </thead>
        <tbody>
          <tr>
            <th scope="row" className={`${rowHead} h-[42px] bg-[#565656]`}>1</th>
            <td colSpan={5} className="relative p-0 h-[42px] bg-[#4472c4] text-center text-[31px] leading-[38px] font-bold text-white">
              Button Form Control
              <span className="absolute -left-1 -top-1 -right-0.5 -bottom-0.5 border-4 border-[#1c7347]">
                <span className="block w-full h-full border-2 border-white" />
              </span>
              <span className="absolute -right-1 -bottom-1 w-3 h-3 bg-[#1c7347] border-l-2 border-t-2 border-white" />
            </td>
            {COLUMNS.slice(5).map((c) => (
              <td key={c} className="p-0 h-[42px] border-r-2 border-b-2 border-[#d4d4d4]" />
            ))}
          </tr>
          {ROWS.map((r) => (
            <tr key={r}>
              <th scope="row" className={`${rowHead} h-[30px] bg-[#171717]`}>{r}</th>
              {COLUMNS.map((c) => (
                <td key={c} className="p-0 h-[30px] border-r-2 border-b-2 border-[#d4d4d4]" />
              ))}
            </tr>
          ))}
        </tbody>
      </table>
    </main>
  );
}

/* ---------- sheet tabs and status bar ---------- */

const SHEETS = [
  { name: "Formula Auditing", width: "w-[266px]" },
  { name: "Checking for Issues", width: "w-[296px]" },
  { name: "Government Addresses", width: "w-[342px]" },
  { name: "Measurement Converter", width: "w-[348px]" },
];

function SheetTab({ name, width, first }: { name: string; width: string; first?: boolean }) {
  return (
    <button className={`${width} shrink-0 h-[50px] bg-[#222]`}>
      <span className={`block h-[41px] -mt-[9px] leading-[46px] text-[25px] ${first ? "border-l-2" : "border-r-2"} border-[#606060]`}>
        {name}
      </span>
    </button>
  );
}

function SheetTabs() {
  return (
    <nav className={`h-[52px] shrink-0 border-t-2 border-[#666] bg-[#323232] flex items-start text-[#848484] whitespace-nowrap ${ARIAL}`}>
      <div className="w-[120px] h-[50px] shrink-0 pl-[30px] flex items-center gap-8">
        <button aria-label="Previous sheet">
          <svg viewBox="0 0 14 20" className="w-3.5 h-5" fill="#686868"><path d="M14 0v20L0 10z" /></svg>
        </button>
        <button aria-label="Next sheet">
          <svg viewBox="0 0 14 20" className="w-3.5 h-5" fill="#686868"><path d="M0 0v20l14-10z" /></svg>
        </button>
      </div>
      <SheetTab name="Grading" width="w-40" first />
      <button className="w-[312px] shrink-0 -mt-0.5 h-[46px] rounded-b-md border-b-2 border-[#666] bg-white text-2xl leading-[48px] font-bold text-[#1f8552]">
        <span className="block pt-0.5">Button Form Control</span>
      </button>
      {SHEETS.map((s) => (
        <SheetTab key={s.name} {...s} />
      ))}
      <button aria-label="New sheet" className="w-[77px] h-[41px] shrink-0 border-r-2 border-[#606060] flex items-center justify-center">
        <svg viewBox="0 0 20 20" className="w-5 h-5">
          <path d="M10 0v20M0 10h20" stroke="#b4b4b4" strokeWidth="4" />
        </svg>
      </button>
    </nav>
  );
}

function StatusBar() {
  const view = "w-[72px] h-full flex items-center justify-center";
  return (
    <footer className="h-[46px] shrink-0 border-t-2 border-black bg-linear-to-b from-[#4a4a4a] to-[#3a3a3a] flex items-center justify-between pl-12 pr-[46px] text-2xl leading-7 text-white">
      <span>Ready</span>
      <div className="h-full flex items-center">
        <button aria-label="Normal view" aria-pressed="true" className={`${view} bg-[#5c5c5c]`}>
          <svg viewBox="0 0 28 28" className="w-7 h-7" fill="none" stroke="#fff" strokeWidth="2">
            <path d="M2 2h24v24H2zM10 2v24M18 2v24M2 10h24M2 18h24" />
          </svg>
        </button>
        <button aria-label="Page layout view" className={view}>
          <svg viewBox="0 0 28 28" className="w-7 h-7" fill="none" stroke="#fff" strokeWidth="2">
            <path d="M1 2h26v24H1zM7 6h14v16H7zM10 10h8M10 14h8M10 18h8" />
          </svg>
        </button>
        <button aria-label="Page break view" className={view}>
          <svg viewBox="0 0 28 28" className="w-7 h-7" fill="none" stroke="#fff" strokeWidth="2">
            <path d="M1 2h26v24H1zM10 2v14M1 16h17V2" />
          </svg>
        </button>
        <button aria-label="Zoom out" className="ml-3.5">
          <svg viewBox="0 0 16 16" className="w-4 h-4"><path d="M0 8h16" stroke="#fff" strokeWidth="4" /></svg>
        </button>
        <input
          type="range"
          aria-label="Zoom"
          className="mx-4 w-[196px] h-2 rounded-full bg-[#7c7c7c] appearance-none [&::-webkit-slider-thumb]:appearance-none [&::-webkit-slider-thumb]:w-[22px] [&::-webkit-slider-thumb]:h-[22px] [&::-webkit-slider-thumb]:rounded-full [&::-webkit-slider-thumb]:bg-[#d0d0d0]"
        />
        <button aria-label="Zoom in">
          <svg viewBox="0 0 16 16" className="w-4 h-4"><path d="M0 8h16M8 0v16" stroke="#fff" strokeWidth="4" /></svg>
        </button>
        <span className="w-[98px] text-right">100%</span>
      </div>
    </footer>
  );
}

export default function App() {
  return (
    <div className={`h-screen flex flex-col overflow-hidden bg-[#2d2d2d] ${UI}`}>
      <TitleBar />
      <RibbonTabs />
      <Ribbon />
      <FormulaBar />
      <Sheet />
      <SheetTabs />
      <StatusBar />
    </div>
  );
}
